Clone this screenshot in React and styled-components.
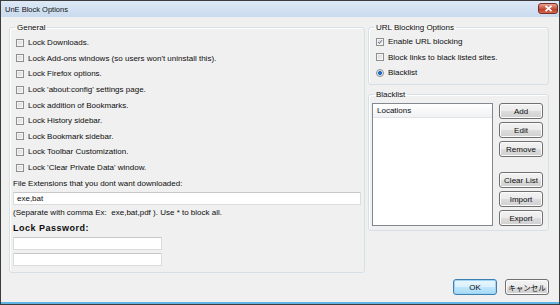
import styled, { createGlobalStyle } from 'styled-components';

const GlobalStyle = createGlobalStyle`
  html, body {
    margin: 0;
    padding: 0;
    background: #f0f0f0;
  }
  body {
    font-family: "Liberation Sans", Arial, sans-serif;
    font-size: 8px;
    color: #0d0d0d;
  }
`;

const generalItems = [
  'Lock Downloads.',
  "Lock Add-ons windows (so users won't uninstall this).",
  'Lock Firefox options.',
  "Lock 'about:config' settings page.",
  'Lock addition of Bookmarks.',
  'Lock History sidebar.',
  'Lock Bookmark sidebar.',
  'Lock Toolbar Customization.',
  "Lock 'Clear Private Data' window.",
];

function CheckBox({ checked }) {
  return (
    <Box>
      {checked && (
        <svg width="8" height="8" viewBox="0 0 8 8">
          <path d="M1.5 4 L3.2 5.8 L6.6 1.6" fill="none" stroke="#4a5f80" strokeWidth="1.2" />
        </svg>
      )}
    </Box>
  );
}

export default function App() {
  return (
    <>
      <GlobalStyle />
      <Window>
        <TitleBar>
          <Title>UnE Block Options</Title>
          <CloseButton>
            <svg width="9" height="7" viewBox="0 0 9 7">
              <path d="M1.5 0.8 L7.5 6.2 M7.5 0.8 L1.5 6.2" stroke="#fff" strokeWidth="1.8" />
            </svg>
          </CloseButton>
        </TitleBar>
        <Body>
          <Columns>
            <Group $width={357} $height={251}>
              <Legend>General</Legend>
              <CheckList>
                {generalItems.map((item) => (
                  <CheckRow key={item}>
                    <CheckBox />
                    <span>{item}</span>
                  </CheckRow>
                ))}
              </CheckList>
              <FieldLabel>File Extensions that you dont want downloaded:</FieldLabel>
              <TextBox $width={348}>exe,bat</TextBox>
              <Hint>(Separate with comma Ex:&nbsp; exe,bat,pdf ). Use * to block all.</Hint>
              <BoldLabel>Lock Password:</BoldLabel>
              <TextBox $width={149} />
              <TextBox $width={149} $gap={3} />
            </Group>
            <RightColumn>
              <Group $width={181} $height={63}>
                <Legend>URL Blocking Options</Legend>
                <OptionList>
                  <CheckRow>
                    <CheckBox checked />
                    <span>Enable URL blocking</span>
                  </CheckRow>
                  <CheckRow>
                    <CheckBox />
                    <span>Block links to black listed sites.</span>
                  </CheckRow>
                  <CheckRow>
                    <Radio />
                    <span>Blacklist</span>
                  </CheckRow>
                </OptionList>
              </Group>
              <Group $width={181} $height={142}>
                <Legend>Blacklist</Legend>
                <ListArea>
                  <ListBox>
                    <ListHeader>Locations</ListHeader>
                  </ListBox>
                  <ButtonColumn>
                    <PushButton>Add</PushButton>
                    <PushButton>Edit</PushButton>
                    <PushButton>Remove</PushButton>
                    <PushButton $space={15}>Clear List</PushButton>
                    <PushButton>Import</PushButton>
                    <PushButton>Export</PushButton>
                  </ButtonColumn>
                </ListArea>
              </Group>
            </RightColumn>
          </Columns>
          <Footer>
            <DialogButton $default>OK</DialogButton>
            <DialogButton $cjk>キャンセル</DialogButton>
          </Footer>
        </Body>
      </Window>
    </>
  );
}

const Window = styled.div`
  box-sizing: border-box;
  width: 560px;
  height: 305px;
  display: flex;
  flex-direction: column;
  border: 1px solid #3c3c3c;
  background: #f0f0f0;
`;

const TitleBar = styled.div`
  height: 16px;
  display: flex;
  align-items: center;
  justify-content: space-between;
  padding: 0 1px 0 4px;
  background: linear-gradient(#dce8f5, #c9dbee);
`;

const Title = styled.div`
  font-size: 7.5px;
  color: #111;
`;

const CloseButton = styled.div`
  box-sizing: border-box;
  width: 20px;
  height: 11px;
  margin-top: -2px;
  display: flex;
  align-items: center;
  justify-content: center;
  border: 1px solid #7a2d24;
  border-radius: 3px;
  background: linear-gradient(#e5a593, #c8553f 50%, #b83a24 51%, #d2674c);
`;

const Body = styled.div`
  flex: 1;
  display: flex;
  flex-direction: column;
  padding: 5px 10px 0 8px;
  border-bottom: 2px solid #5fb4e4;
`;

const Columns = styled.div`
  display: flex;
  gap: 3px;
`;

const RightColumn = styled.div`
  display: flex;
  flex-direction: column;
  gap: 4px;
`;

const Group = styled.fieldset`
  box-sizing: border-box;
  width: ${(p) => p.$width}px;
  height: ${(p) => p.$height}px;
  margin: 0;
  padding: 0 3px;
  border: 1px solid #d5dfe5;
  border-radius: 3px;
  box-shadow: inset 1px 1px 0 #fff;
  display: flex;
  flex-direction: column;
  align-items: flex-start;
`;

const Legend = styled.legend`
  padding: 0 2px;
  margin-left: 2px;
  line-height: 11px;
`;

const CheckList = styled.div`
  margin: 2px 0 0 3px;
  display: flex;
  flex-direction: column;
`;

const OptionList = styled.div`
  margin: 1px 0 0 4px;
  display: flex;
  flex-direction: column;
`;

const CheckRow = styled.div`
  height: 15.6px;
  display: flex;
  align-items: center;
  gap: 4px;
  white-space: nowrap;
`;

const Box = styled.span`
  box-sizing: border-box;
  width: 8px;
  height: 8px;
  border: 1px solid #8e8f8f;
  background: linear-gradient(135deg, #d6d6d6, #f4f4f4);
  box-shadow: inset 0 0 0 1px #f4f4f4;
  display: flex;
  align-items: center;
  justify-content: center;
`;

const Radio = styled.span`
  box-sizing: border-box;
  width: 8px;
  height: 8px;
  border-radius: 50%;
  border: 1px solid #8e8f8f;
  background: radial-gradient(circle, #1f6cc5 0 1.8px, #dfe6ee 2.2px);
`;

const FieldLabel = styled.div`
  margin-top: 3px;
  line-height: 11px;
`;

const TextBox = styled.div`
  box-sizing: border-box;
  width: ${(p) => p.$width}px;
  height: 13px;
  margin-top: ${(p) => p.$gap ?? 3}px;
  padding-left: 3px;
  line-height: 11px;
  background: #fff;
  border: 1px solid #dcdcdc;
  border-top-color: #c8c8c8;
`;

const Hint = styled.div`
  margin-top: 2px;
  line-height: 11px;
`;

const BoldLabel = styled.div`
  margin-top: 5px;
  line-height: 11px;
  font-weight: bold;
  font-size: 9px;
  letter-spacing: 0.5px;
`;

const ListArea = styled.div`
  margin-top: 3px;
  display: flex;
  gap: 6px;
`;

const ListBox = styled.div`
  box-sizing: border-box;
  width: 121px;
  height: 123px;
  background: #fff;
  border: 1px solid #828790;
`;

const ListHeader = styled.div`
  height: 13px;
  line-height: 13px;
  padding-left: 4px;
  background: linear-gradient(#ffffff, #f1f2f4);
  border-bottom: 1px solid #e2e3e5;
`;

const ButtonColumn = styled.div`
  display: flex;
  flex-direction: column;
  gap: 3px;
`;

const PushButton = styled.div`
  box-sizing: border-box;
  width: 44px;
  height: 16px;
  margin-top: ${(p) => (p.$space ? p.$space - 3 : 0)}px;
  display: flex;
  align-items: center;
  justify-content: center;
  white-space: nowrap;
  border: 1px solid #707070;
  border-radius: 3px;
  background: linear-gradient(#f2f2f2, #ebebeb 50%, #dddddd 51%, #cfcfcf);
  box-shadow: inset 0 0 0 1px #fbfbfb;
`;

const Footer = styled.div`
  margin-top: 6px;
  display: flex;
  justify-content: flex-end;
  gap: 8px;
`;

const DialogButton = styled.div`
  box-sizing: border-box;
  width: 44px;
  height: 16px;
  display: flex;
  align-items: center;
  justify-content: center;
  white-space: nowrap;
  font-family: ${(p) => (p.$cjk ? '"Noto Sans CJK JP", sans-serif' : 'inherit')};
  font-size: ${(p) => (p.$cjk ? '7.5px' : 'inherit')};
  border: 1px solid ${(p) => (p.$default ? '#3c7fb1' : '#707070')};
  border-radius: 3px;
  background: ${(p) =>
    p.$default
      ? 'linear-gradient(#eaf6fd, #d9f0fc 50%, #bee6fd 51%, #a7d9f5)'
      : 'linear-gradient(#f2f2f2, #ebebeb 50%, #dddddd 51%, #cfcfcf)'};
  box-shadow: inset 0 0 0 1px ${(p) => (p.$default ? '#9fd5f4' : '#fbfbfb')};
`;
